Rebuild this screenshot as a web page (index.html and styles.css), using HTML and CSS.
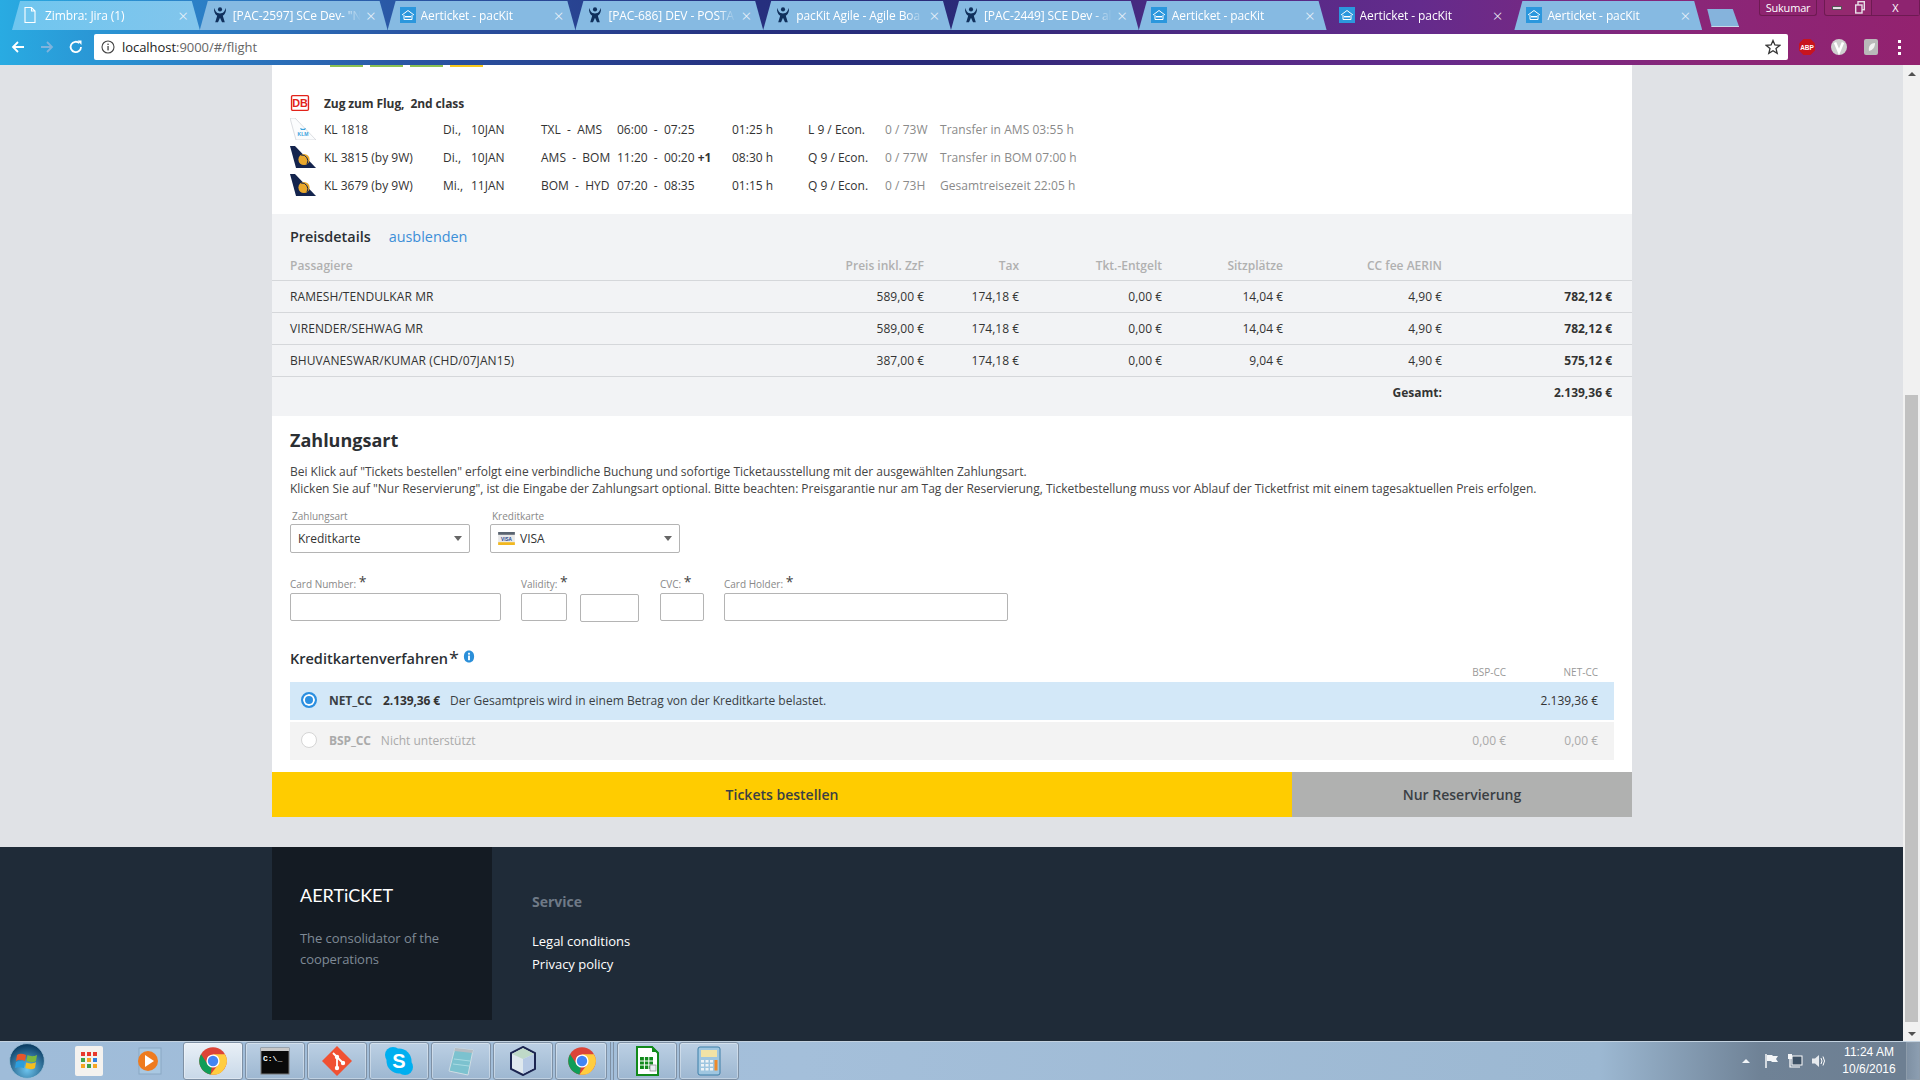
FILE: index.html
```html
<!DOCTYPE html>
<html lang="de">
<head>
<meta charset="utf-8">
<title>Aerticket - packit</title>
<link rel="stylesheet" href="styles.css">
</head>
<body>
<svg class="defs" aria-hidden="true">
  <symbol id="jira" viewBox="0 0 16 20">
    <circle cx="8" cy="3" r="2.6" fill="#10305c"/>
    <path d="M1 1 C2 6 4 8 8 8 C12 8 14 6 15 1 L15.5 4 C15 8 13 10 11.5 11 L14 19 H10.5 L8 13.5 L5.5 19 H2 L4.5 11 C3 10 1 8 .5 4Z" fill="#10305c"/>
  </symbol>
  <symbol id="packit" viewBox="0 0 16 16">
    <rect width="16" height="16" fill="#2b97dd"/>
    <path d="M2 8 L8 3.5 L14 8 M4 8 V12.5 H12 V8" fill="none" stroke="#fff" stroke-width="1"/>
    <rect x="5" y="9" width="6" height="1.4" fill="#fff"/>
  </symbol>
  <symbol id="doc" viewBox="0 0 12 16">
    <path d="M1 .5 H7.5 L11 4 V15.5 H1Z M7.5 .5 V4 H11" fill="none" stroke="#fff" stroke-width="1.1"/>
  </symbol>
  <symbol id="chromeicon" viewBox="0 0 48 48">
    <circle cx="24" cy="24" r="22" fill="#db4437"/>
    <path d="M4.9 13 L15.3 29 L22 34 L20 45.6 A22 22 0 0 1 4.9 13Z" fill="#0f9d58"/>
    <path d="M43.1 13 H24 L32.7 29 L20 45.6 A22 22 0 0 0 43.1 13Z" fill="#ffcd40"/>
    <circle cx="24" cy="24" r="10.5" fill="#fff"/>
    <circle cx="24" cy="24" r="8.3" fill="#4285f4"/>
  </symbol>
  <symbol id="jet" viewBox="0 0 26 22">
    <path d="M0 0 H5 L26 22 H6 Z" fill="#14244d"/>
    <circle cx="14" cy="13.5" r="5.6" fill="#e9a82c"/>
    <path d="M11 9 A6 6 0 0 1 17 18" fill="none" stroke="#14244d" stroke-width="1"/>
  </symbol>
</svg>

<header class="browser">
  <div class="tabstrip">
    <div class="tab tab-first"><svg class="fav fav-doc"><use href="#doc"/></svg><span class="tab-title">Zimbra: Jira (1)</span><span class="tab-x">×</span></div>
    <div class="tab"><svg class="fav"><use href="#jira"/></svg><span class="tab-title">[PAC-2597] SCe Dev- "N</span><span class="tab-x">×</span></div>
    <div class="tab"><svg class="fav"><use href="#packit"/></svg><span class="tab-title">Aerticket - pacKit</span><span class="tab-x">×</span></div>
    <div class="tab"><svg class="fav"><use href="#jira"/></svg><span class="tab-title">[PAC-686] DEV - POSTA</span><span class="tab-x">×</span></div>
    <div class="tab"><svg class="fav"><use href="#jira"/></svg><span class="tab-title">pacKit Agile - Agile Boa</span><span class="tab-x">×</span></div>
    <div class="tab"><svg class="fav"><use href="#jira"/></svg><span class="tab-title">[PAC-2449] SCE Dev - al</span><span class="tab-x">×</span></div>
    <div class="tab"><svg class="fav"><use href="#packit"/></svg><span class="tab-title">Aerticket - pacKit</span><span class="tab-x">×</span></div>
    <div class="tab tab-active"><svg class="fav"><use href="#packit"/></svg><span class="tab-title">Aerticket - pacKit</span><span class="tab-x">×</span></div>
    <div class="tab"><svg class="fav"><use href="#packit"/></svg><span class="tab-title">Aerticket - pacKit</span><span class="tab-x">×</span></div>
    <div class="newtab"></div>
    <div class="winctl">
      <div class="user">Sukumar</div>
      <div class="winbtns">
        <span class="winbtn win-min"><i class="min-glyph"></i></span>
        <span class="winbtn win-max"><svg class="max-glyph" viewBox="0 0 10 13"><rect x="3" y=".7" width="6.3" height="8" fill="none" stroke="#e8e0e8" stroke-width="1.4"/><rect x=".7" y="4" width="6.3" height="8" fill="#94296f" stroke="#e8e0e8" stroke-width="1.4"/></svg></span>
        <span class="winbtn win-close">X</span>
      </div>
    </div>
  </div>
  <div class="toolbar">
    <svg class="nav" viewBox="0 0 16 16"><path d="M14 8 H3 M8 3 L3 8 L8 13" fill="none" stroke="#fff" stroke-width="1.8"/></svg>
    <svg class="nav nav-dim" viewBox="0 0 16 16"><path d="M2 8 H13 M8 3 L13 8 L8 13" fill="none" stroke="#7fb3dc" stroke-width="1.8"/></svg>
    <svg class="nav" viewBox="0 0 16 16"><path d="M13 8 A5.2 5.2 0 1 1 11.4 4.2" fill="none" stroke="#fff" stroke-width="1.8"/><path d="M9.5 1.5 H13.5 V6 Z" fill="#fff"/></svg>
    <div class="omnibox">
      <svg class="info" viewBox="0 0 14 14"><circle cx="7" cy="7" r="6" fill="none" stroke="#444" stroke-width="1.1"/><rect x="6.4" y="6" width="1.3" height="4.4" fill="#444"/><rect x="6.4" y="3.6" width="1.3" height="1.4" fill="#444"/></svg>
      <span class="url">localhost<span class="url-dim">:9000/#/flight</span></span>
      <svg class="star" viewBox="0 0 16 16"><path d="M8 1.5 L9.9 6 L14.7 6.4 L11 9.6 L12.2 14.4 L8 11.8 L3.8 14.4 L5 9.6 L1.3 6.4 L6.1 6Z" fill="none" stroke="#333" stroke-width="1.3"/></svg>
    </div>
    <div class="ext-row">
      <svg class="ext" viewBox="0 0 18 18"><path d="M5.5 1 H12.5 L17 5.5 V12.5 L12.5 17 H5.5 L1 12.5 V5.5Z" fill="#c8141e"/><text x="9" y="11.8" class="abp-text">ABP</text></svg>
      <svg class="ext" viewBox="0 0 18 18"><circle cx="9" cy="9" r="8" fill="#cfcfcf"/><path d="M5 4.5 L9 14 L13 4.5" fill="none" stroke="#fff" stroke-width="2.6"/></svg>
      <svg class="ext" viewBox="0 0 18 18"><rect x="2" y="1" width="14" height="16" rx="2" fill="#b9b9b9"/><path d="M7 13 C6 8 9 5 13 5 C13 9 11 12 7 13Z" fill="#f1f1f1"/></svg>
      <span class="kebab"><i></i><i></i><i></i></span>
    </div>
  </div>
</header>

<div class="viewport">
  <main class="page">
    <div class="wrap card">
      <div class="steps"><i class="step step-g"></i><i class="step step-g"></i><i class="step step-g"></i><i class="step step-y"></i></div>

      <section class="flights">
        <div class="train">
          <svg class="db" viewBox="0 0 16 14"><rect x=".6" y=".6" width="14.8" height="12.8" rx="1" fill="#fff" stroke="#e2231a" stroke-width="1.2"/><text x="8" y="10.6" class="db-text">DB</text></svg>
          <strong>Zug zum Flug,&nbsp; 2nd class</strong>
        </div>
        <div class="flight">
          <svg class="tail" viewBox="0 0 26 22"><path d="M0 0 H5 L26 22 H6 Z" fill="#fbfcfd" stroke="#d3d6da" stroke-width=".8"/><path d="M10 10 l1 2 h4 l1 -2 l-3 1z" fill="#3aa2dd"/><text x="13" y="18" class="klm-text">KLM</text></svg>
          <span>KL 1818</span><span>Di.,</span><span>10JAN</span><span class="pre">TXL  -  AMS</span><span class="pre">06:00  -  07:25</span><span>01:25 h</span><span>L 9 / Econ.</span><span class="muted">0 / 73W</span><span class="muted">Transfer in AMS 03:55 h</span>
        </div>
        <div class="flight">
          <svg class="tail"><use href="#jet"/></svg>
          <span>KL 3815 (by 9W)</span><span>Di.,</span><span>10JAN</span><span class="pre">AMS  -  BOM</span><span class="pre">11:20  -  00:20 <b class="plus">+1</b></span><span>08:30 h</span><span>Q 9 / Econ.</span><span class="muted">0 / 77W</span><span class="muted">Transfer in BOM 07:00 h</span>
        </div>
        <div class="flight">
          <svg class="tail"><use href="#jet"/></svg>
          <span>KL 3679 (by 9W)</span><span>Mi.,</span><span>11JAN</span><span class="pre">BOM  -  HYD</span><span class="pre">07:20  -  08:35</span><span>01:15 h</span><span>Q 9 / Econ.</span><span class="muted">0 / 73H</span><span class="muted">Gesamtreisezeit 22:05 h</span>
        </div>
      </section>

      <section class="prices">
        <div class="price-title"><strong>Preisdetails</strong><a class="hide-link">ausblenden</a></div>
        <div class="prow phead"><span>Passagiere</span><span>Preis inkl. ZzF</span><span>Tax</span><span>Tkt.-Entgelt</span><span>Sitzplätze</span><span>CC fee AERIN</span><span></span></div>
        <div class="prow"><span>RAMESH/TENDULKAR MR</span><span>589,00 €</span><span>174,18 €</span><span>0,00 €</span><span>14,04 €</span><span>4,90 €</span><b>782,12 €</b></div>
        <div class="prow"><span>VIRENDER/SEHWAG MR</span><span>589,00 €</span><span>174,18 €</span><span>0,00 €</span><span>14,04 €</span><span>4,90 €</span><b>782,12 €</b></div>
        <div class="prow"><span>BHUVANESWAR/KUMAR (CHD/07JAN15)</span><span>387,00 €</span><span>174,18 €</span><span>0,00 €</span><span>9,04 €</span><span>4,90 €</span><b>575,12 €</b></div>
        <div class="prow ptotal"><span></span><span></span><span></span><span></span><span></span><b>Gesamt:</b><b>2.139,36 €</b></div>
      </section>

      <section class="payment">
        <h2>Zahlungsart</h2>
        <p class="intro">Bei Klick auf "Tickets bestellen" erfolgt eine verbindliche Buchung und sofortige Ticketausstellung mit der ausgewählten Zahlungsart.<br>Klicken Sie auf "Nur Reservierung", ist die Eingabe der Zahlungsart optional. Bitte beachten: Preisgarantie nur am Tag der Reservierung, Ticketbestellung muss vor Ablauf der Ticketfrist mit einem tagesaktuellen Preis erfolgen.</p>

        <div class="selects">
          <div class="field field-type">
            <label>Zahlungsart</label>
            <div class="select"><span>Kreditkarte</span><i class="caret"></i></div>
          </div>
          <div class="field field-card">
            <label>Kreditkarte</label>
            <div class="select">
              <svg class="visa" viewBox="0 0 18 14"><rect width="18" height="14" rx="1" fill="#e9e9e9"/><rect width="18" height="3" fill="#5a6470"/><rect y="11" width="18" height="3" fill="#f2b820"/><text x="9" y="9.6" class="visa-text">VISA</text></svg>
              <span>VISA</span><i class="caret"></i>
            </div>
          </div>
        </div>

        <div class="inputs">
          <div class="ifield if-num"><div class="ilabel">Card Number: <sup>*</sup></div><div class="input"></div></div>
          <div class="ifield if-val"><div class="ilabel">Validity: <sup>*</sup></div><div class="input"></div></div>
          <div class="ifield if-val2"><div class="ilabel">&nbsp;</div><div class="input input-low"></div></div>
          <div class="ifield if-cvc"><div class="ilabel">CVC: <sup>*</sup></div><div class="input"></div></div>
          <div class="ifield if-holder"><div class="ilabel">Card Holder: <sup>*</sup></div><div class="input"></div></div>
        </div>

        <div class="method-head">
          <h3>Kreditkartenverfahren<sup>*</sup><svg class="i-info" viewBox="0 0 12 14"><path d="M6 .5 C9.4 .5 11.5 3 11.5 7 C11.5 11 9.4 13.5 6 13.5 C2.6 13.5 .5 11 .5 7 C.5 3 2.6 .5 6 .5Z" fill="#2b8fd9"/><rect x="5" y="6" width="2" height="5" fill="#fff"/><rect x="5" y="3" width="2" height="2" fill="#fff"/></svg></h3>
          <span class="mcol">BSP-CC</span><span class="mcol">NET-CC</span>
        </div>
        <div class="method method-on">
          <span class="radio radio-on"></span><b>NET_CC</b><b class="m-price">2.139,36 €</b><span class="m-desc">Der Gesamtpreis wird in einem Betrag von der Kreditkarte belastet.</span>
          <span class="mval"></span><span class="mval">2.139,36 €</span>
        </div>
        <div class="method method-off">
          <span class="radio"></span><b>BSP_CC</b><span class="m-note">Nicht unterstützt</span>
          <span class="mval">0,00 €</span><span class="mval">0,00 €</span>
        </div>
      </section>

      <div class="actions">
        <div class="btn btn-book">Tickets bestellen</div>
        <div class="btn btn-reserve">Nur Reservierung</div>
      </div>
    </div>

    <footer class="footer">
      <div class="wrap foot-inner">
        <div class="brand">
          <div class="brand-name">AERTiCKET</div>
          <p>The consolidator of the cooperations</p>
        </div>
        <div class="service">
          <h4>Service</h4>
          <a>Legal conditions</a>
          <a>Privacy policy</a>
        </div>
      </div>
    </footer>
  </main>
  <aside class="scrollbar">
    <i class="sb-up"></i>
    <i class="sb-thumb"></i>
    <i class="sb-down"></i>
  </aside>
</div>

<nav class="taskbar">
  <svg class="orb" viewBox="0 0 36 36">
    <defs><radialGradient id="orbg" cx=".5" cy=".75" r=".7"><stop offset="0" stop-color="#6cc4ee"/><stop offset="1" stop-color="#0d3f66"/></radialGradient></defs>
    <circle cx="18" cy="18" r="17.4" fill="url(#orbg)" stroke="#9fc3da" stroke-width=".8"/>
    <path d="M8 12 C11 10 14 11 17 12 L16 18 C13 17 10 16 7 18Z" fill="#e8562a"/>
    <path d="M18.5 12 C21 13 24 14 28 12 L27 18 C24 20 21 19 17.5 18Z" fill="#7cb83e"/>
    <path d="M7 19 C10 17.5 13 18 15.8 19 L15 25 C12 24 9 24 6 25Z" fill="#2c9ddc"/>
    <path d="M17.2 19.5 C21 20.5 24 21 27 19 L26 25 C23 27 20 26 16.3 25Z" fill="#f5bd1f"/>
  </svg>
  <div class="pinned pin-apps">
    <svg viewBox="0 0 30 30" class="ti"><rect x="1" y="0" width="28" height="30" rx="2" fill="#f4f2ef"/><g fill="#e8382d"><rect x="7" y="6" width="4" height="4"/><rect x="13" y="6" width="4" height="4"/><rect x="19" y="6" width="4" height="4"/></g><g fill="#3fa14a"><rect x="7" y="12" width="4" height="4"/></g><g fill="#f5a623"><rect x="13" y="12" width="4" height="4"/></g><g fill="#2f7fe0"><rect x="19" y="12" width="4" height="4"/></g><g fill="#f5a623"><rect x="7" y="18" width="4" height="4"/></g><g fill="#3fa14a"><rect x="13" y="18" width="4" height="4"/></g><g fill="#f5a623"><rect x="19" y="18" width="4" height="4"/></g></svg>
  </div>
  <div class="pinned pin-media">
    <svg viewBox="0 0 30 30" class="ti"><rect x="5" y="2" width="22" height="26" fill="#a9c8e2" stroke="#8aa8c4"/><circle cx="14" cy="15" r="10" fill="#ee7b1f"/><path d="M11 9 L20 15 L11 21Z" fill="#fff"/></svg>
  </div>
  <div class="tbtn tbtn-active"><svg class="ti"><use href="#chromeicon"/></svg></div>
  <div class="tbtn">
    <svg viewBox="0 0 30 30" class="ti"><rect x="1" y="2" width="28" height="26" fill="#0a0a0a" stroke="#777"/><rect x="1" y="2" width="28" height="3" fill="#c8c8c8"/><text x="3" y="15" class="cmd-text">C:\_</text></svg>
  </div>
  <div class="tbtn">
    <svg viewBox="0 0 30 30" class="ti"><path d="M15 0 L30 15 L15 30 L0 15Z" fill="#f05133"/><path d="M11 7 L21 17 M15 11 V22" stroke="#fff" stroke-width="1.8"/><circle cx="15" cy="11" r="2.2" fill="#fff"/><circle cx="15" cy="22" r="2.2" fill="#fff"/><circle cx="21" cy="17" r="2.2" fill="#fff"/></svg>
  </div>
  <div class="tbtn">
    <svg viewBox="0 0 30 30" class="ti"><circle cx="9" cy="9" r="8" fill="#00aff0"/><circle cx="21" cy="21" r="8" fill="#00aff0"/><circle cx="15" cy="15" r="12.5" fill="#00aff0"/><text x="15" y="22" class="sk-text">S</text></svg>
  </div>
  <div class="tbtn">
    <svg viewBox="0 0 30 30" class="ti"><path d="M9 2 L27 4 L22 29 L3 25Z" fill="#7cc2cf" stroke="#cfdde4"/><path d="M9 2 L27 4 L26.3 7 L8.4 5Z" fill="#b6bcc2"/><path d="M8 13 L24 15 M7 18 L23 20" stroke="#a8dbe3"/></svg>
  </div>
  <div class="tbtn">
    <svg viewBox="0 0 30 30" class="ti"><path d="M15 1 L27 7 V23 L15 29 L3 23 V7Z" fill="#dfe8ee" stroke="#1b2450" stroke-width="2"/><path d="M4 8 L15 13 L26 8 L15 2Z" fill="#bfd9c8"/><path d="M15 13 V28 L26 22 V8Z" fill="#b6c9e4"/></svg>
  </div>
  <div class="tbtn tbtn-short"><svg class="ti"><use href="#chromeicon"/></svg></div>
  <div class="tb-sep"></div>
  <div class="tbtn">
    <svg viewBox="0 0 30 30" class="ti"><path d="M5 1 H20 L26 7 V29 H5Z" fill="#fff" stroke="#128a1b" stroke-width="2"/><path d="M20 0 L26 6 H20Z" fill="#128a1b"/><rect x="8" y="11" width="13" height="12" fill="#128a1b"/><path d="M12.4 11 V23 M16.8 11 V23 M8 15 H21 M8 19 H21" stroke="#fff"/><rect x="18" y="19" width="6" height="6" fill="#e9edf0" stroke="#777" stroke-width=".6"/></svg>
  </div>
  <div class="tbtn">
    <svg viewBox="0 0 30 30" class="ti"><rect x="4" y="1" width="22" height="28" rx="2" fill="#9fc6e0" stroke="#3d7ea8"/><rect x="7" y="4" width="16" height="7" fill="#f2e3a6"/><g fill="#eef3f6"><rect x="7" y="14" width="3" height="2.5"/><rect x="11.5" y="14" width="3" height="2.5"/><rect x="16" y="14" width="3" height="2.5"/><rect x="7" y="18" width="3" height="2.5"/><rect x="11.5" y="18" width="3" height="2.5"/><rect x="16" y="18" width="3" height="2.5"/><rect x="7" y="22" width="3" height="2.5"/><rect x="11.5" y="22" width="3" height="2.5"/><rect x="16" y="22" width="3" height="2.5"/></g><rect x="20.5" y="14" width="3" height="10.5" fill="#ee8a2a"/></svg>
  </div>
  <div class="tray">
    <i class="tray-up"></i>
    <svg class="tray-ic" viewBox="0 0 16 16"><path d="M3 1 V15" stroke="#fff" stroke-width="1.4"/><path d="M4 2 H9 L10 3 H15 L13 6 L15 9 H9 L8 8 H4Z" fill="#f4f6f8"/></svg>
    <svg class="tray-ic" viewBox="0 0 16 16"><rect x="5" y="3" width="10" height="9" fill="#3e5266" stroke="#fff"/><rect x="1" y="1" width="4" height="5" fill="#f4f6f8"/><path d="M3 6 V14 H13" fill="none" stroke="#fff" stroke-width="1.2"/></svg>
    <svg class="tray-ic" viewBox="0 0 16 16"><path d="M1 5.5 H4 L8 2 V14 L4 10.5 H1Z" fill="#e6eaee"/><path d="M10 5 Q12 8 10 11 M12 3.5 Q15 8 12 12.5" fill="none" stroke="#fff"/></svg>
    <div class="clock"><span>11:24 AM</span><span>10/6/2016</span></div>
    <i class="showdesk"></i>
  </div>
</nav>
</body>
</html>
```
FILE: styles.css
```css
* { box-sizing: border-box; }
html, body { margin: 0; height: 100%; }
body {
  width: 1920px; height: 1080px; overflow: hidden;
  display: flex; flex-direction: column;
  font-family: "Open Sans", "Liberation Sans", sans-serif;
  font-size: 12px; color: #333;
}
.defs { display: none; }
svg { display: block; flex: none; }

/* Browser chrome */
.browser {
  height: 65px; flex: none;
  background: linear-gradient(90deg, #29abe2 0, #2b7fc6 200px, #2a56a4 400px, #262f7e 760px, #2a2a78 960px, #4f2a84 1200px, #642b8c 1420px, #8a2678 1700px, #93226f 1920px);
}
.tabstrip { height: 30px; display: flex; padding: 1px 0 0 12px; position: relative; }
.tab {
  width: 187.8px; height: 29px; flex: none;
  display: flex; align-items: center; padding: 0 0 1px 12px; position: relative;
  background: #86bae2;
  clip-path: polygon(8px 0, calc(100% - 8px) 0, 100% 100%, 0 100%);
  color: #fff; font-size: 12px; letter-spacing: -.1px;
}
.tab-first { background: linear-gradient(90deg, #6fc6ef, #82c5ec); }
.tab-active { background: transparent; }
.fav { width: 16px; height: 16px; margin-right: 5px; }
.fav-doc { width: 12px; margin: 0 9px 0 0; }
.tab-title {
  width: 128px; white-space: nowrap; overflow: hidden;
  -webkit-mask-image: linear-gradient(90deg, #000 110px, transparent 128px);
  mask-image: linear-gradient(90deg, #000 110px, transparent 128px);
}
.tab-x { width: 14px; margin-left: 3px; font-size: 17px; line-height: 1; font-weight: 300; text-align: center; color: #eef4fa; }
.newtab {
  width: 32px; height: 18px; margin: 8px 0 0 5px; flex: none;
  background: #85b3dc; border-bottom: 1px solid #c9d9ea;
  clip-path: polygon(0 0, 80% 0, 100% 100%, 14% 100%);
}
.winctl { display: flex; margin-left: auto; height: 17px; margin-top: -1px; gap: 7px; }
.user {
  width: 58px; height: 16px; text-align: center; color: #fff; font-size: 11px; line-height: 15px;
  border: 1px solid #6e1a52; border-top: 0; border-radius: 0 0 3px 3px; letter-spacing: -.2px; background: #8e2470;
}
.winbtns { display: flex; width: 96px; height: 16px; border: 1px solid #6e1a52; border-top: 0; border-radius: 0 0 3px 3px; background: #94296f; }
.winbtn { display: flex; align-items: center; justify-content: center; color: #fff; }
.win-min { width: 24px; }
.win-max { width: 22px; }
.win-close { flex: 1; font-size: 11px; background: #8e2470; border-left: 1px solid #6e1a52; }
.min-glyph { width: 10px; height: 4px; background: #e8e0e8; border: 1px solid #555; }
.max-glyph { width: 10px; height: 13px; }

.toolbar { height: 35px; display: flex; align-items: flex-start; padding: 4px 0 0 10px; }
.nav { width: 16px; height: 16px; margin: 5px 0 0 0; }
.nav-dim { margin-left: 13px; }
.nav + .nav + .nav { margin-left: 13px; }
.omnibox {
  width: 1694px; height: 26px; margin-left: 10px; background: #fff; border-radius: 2px;
  display: flex; align-items: center; padding: 0 7px 0 7px;
}
.info { width: 14px; height: 14px; margin-right: 7px; }
.url { font-size: 13px; color: #222; letter-spacing: -.05px; }
.url-dim { color: #666; }
.star { width: 16px; height: 16px; margin-left: auto; }
.ext-row { display: flex; align-items: center; gap: 14px; margin-left: 10px; height: 26px; }
.ext { width: 18px; height: 18px; }
.abp-text { font: 700 6.5px "Liberation Sans", sans-serif; fill: #fff; text-anchor: middle; }
.kebab { display: flex; flex-direction: column; gap: 3px; margin-left: 4px; }
.kebab i { width: 3px; height: 3px; background: #fff; }

/* Page */
.viewport { flex: 1; display: flex; min-height: 0; }
.page { flex: 1; min-width: 0; background: #e0e2e6; display: flex; flex-direction: column; }
.wrap { width: 1360px; margin-left: 272px; }
.card { background: #fff; margin-bottom: 30px; }
.steps { display: flex; height: 2px; padding-left: 58px; gap: 7px; }
.step { width: 33px; height: 2px; }
.step-g { background: #8cc152; }
.step-y { background: #f8c91c; }

.flights { padding: 24px 0 15px 18px; }
.train { height: 24px; display: flex; align-items: center; }
.train strong { font-weight: 700; font-size: 12px; margin-left: 14px; letter-spacing: -.1px; }
.db { width: 20px; height: 16px; margin-left: 0; }
.db-text { font: 700 9.5px "Liberation Sans", sans-serif; fill: #e2231a; text-anchor: middle; }
.klm-text { font: 700 5px "Liberation Sans", sans-serif; fill: #3aa2dd; text-anchor: middle; }
.flight {
  height: 28px; display: grid; align-items: center; white-space: nowrap;
  grid-template-columns: 34px 119px 28px 70px 76px 115px 76px 77px 55px 1fr;
}
.tail { width: 26px; height: 22px; }
.pre { white-space: pre; }
.plus { font-weight: 700; }
.muted { color: #8a8a8a; letter-spacing: .05px; }

.prices { background: #f2f3f5; padding-top: 13px; }
.price-title { height: 20px; padding-left: 18px; display: flex; align-items: center; gap: 18px; font-size: 14.4px; line-height: 20px; }
.price-title strong { font-weight: 600; color: #2b2f33; }
.hide-link { color: #3d8fd8; }
.prow {
  height: 32px; padding: 0 20px 0 18px; align-items: center;
  display: grid; grid-template-columns: 1fr 120px 95px 143px 121px 159px 170px;
  border-bottom: 1px solid #d5d7da; text-align: right; color: #333;
}
.prow > :first-child { text-align: left; letter-spacing: .08px; }
.prow b { font-weight: 700; }
.phead { height: 34px; padding-top: 3px; color: #b0b0b0; font-weight: 600; }
.ptotal { height: 39px; padding-bottom: 8px; border-bottom: 0; }

.payment { padding: 12px 18px 0; }
.payment h2 { margin: 0 0 11px; font-size: 18px; line-height: 24px; font-weight: 700; color: #2b2f33; }
.intro { margin: 0 0 13px; line-height: 17px; color: #444; letter-spacing: -.015px; }
.selects { display: flex; gap: 20px; }
.field-type { width: 180px; }
.field-card { width: 190px; }
.field label { display: block; font-size: 10px; line-height: 12px; color: #888; margin: 0 0 2px 2px; }
.select {
  height: 29px; border: 1px solid #b4b4b4; border-radius: 2px; background: #fff;
  display: flex; align-items: center; padding: 0 7px; font-size: 12px; color: #333;
}
.caret { margin-left: auto; border: 4px solid transparent; border-top: 5px solid #666; border-bottom: 0; }
.visa { width: 17px; height: 13px; margin-right: 5px; }
.visa-text { font: 700 5px "Liberation Sans", sans-serif; fill: #1a3e8c; text-anchor: middle; }

.inputs { display: flex; margin-top: 26px; }
.ilabel { height: 14px; font-size: 10px; line-height: 11px; color: #888; white-space: nowrap; }
.ilabel sup { font-size: 14px; line-height: 0; vertical-align: 1px; color: #444; }
.input { height: 28px; border: 1px solid #b4b4b4; border-radius: 2px; background: #fff; }
.input-low { margin-top: 1px; }
.if-num { width: 211px; }
.if-val { width: 46px; margin-left: 20px; }
.if-val2 { width: 59px; margin-left: 13px; }
.if-cvc { width: 44px; margin-left: 21px; }
.if-holder { width: 284px; margin-left: 20px; }

.method-head { display: flex; height: 33px; margin-top: 27px; position: relative; }
.method-head h3 { margin: 0 auto 0 0; font-size: 14.5px; line-height: 20px; font-weight: 600; color: #2b2f33; display: flex; align-items: center; height: 20px; }
.method-head sup { font-size: 18px; line-height: 0; font-weight: 400; align-self: flex-start; margin: 9px 1px 0 1px; }
.i-info { width: 12px; height: 13px; margin: -5px 0 0 3px; }
.mcol { width: 92px; text-align: right; font-size: 10px; color: #999; margin-top: 17px; line-height: 12px; }
.mcol:last-child { margin-right: 16px; }
.method { height: 38px; display: flex; align-items: center; padding: 0 16px 2px 11px; margin-bottom: 2px; }
.method-on { background: #d3e8f8; color: #3a3f44; }
.method-off { background: #f3f3f3; color: #aaa; }
.radio { width: 16px; height: 16px; border-radius: 50%; border: 1.5px solid #d5d5d5; background: #fff; margin-right: 12px; flex: none; }
.radio-on { border: 2px solid #2b8fe0; box-shadow: inset 0 0 0 2px #fff; background: #2b8fe0; }
.method b { font-weight: 700; letter-spacing: -.1px; }
.m-price { margin-left: 11px; color: #333; }
.m-desc { margin-left: 10px; }
.m-note { margin-left: 10px; }
.mval { width: 92px; text-align: right; }
.m-desc + .mval, .m-note + .mval { margin-left: auto; }
.method-on .mval { color: #333; }

.actions { display: flex; margin-top: 12px; height: 45px; }
.btn { display: flex; align-items: center; justify-content: center; font-size: 14px; font-weight: 600; color: #3a3f44; }
.btn-book { width: 1020px; background: #ffcc00; }
.btn-reserve { flex: 1; background: #b0b1b0; }

/* Footer */
.footer { flex: 1; background: #1f2b38; }
.foot-inner { display: flex; }
.brand { width: 220px; height: 173px; background: #141b23; padding: 36px 28px 0; }
.brand-name { font-family: Lato, sans-serif; font-size: 18px; line-height: 24px; color: #fff; }
.brand p { margin: 21px 0 0; font-size: 13px; line-height: 21px; color: #7f8a96; letter-spacing: -.05px; }
.service { margin-left: 40px; padding-top: 45px; display: flex; flex-direction: column; }
.service h4 { margin: 0 0 18px; font-size: 14px; line-height: 20px; font-weight: 700; color: #6f7a87; }
.service a { font-size: 13px; line-height: 23px; color: #fff; }

.scrollbar { width: 17px; background: #f1f1f1; display: flex; flex-direction: column; align-items: center; }
.sb-up { margin-top: 7px; border: 4px solid transparent; border-bottom: 4px solid #505050; border-top: 0; border-left-width: 4px; }
.sb-thumb { width: 13px; height: 627px; margin-top: 319px; background: #c1c1c1; }
.sb-down { margin-top: auto; margin-bottom: 5px; border: 4px solid transparent; border-top: 4px solid #505050; border-bottom: 0; }

/* Taskbar */
.taskbar {
  height: 39px; flex: none; display: flex; align-items: center; padding-left: 9px;
  background: linear-gradient(90deg, #9fbcd9 0, #a4bfda 800px, #9cb8d2 1600px, #6f8296 1760px, #6d7f92 1900px);
  border-top: 1px solid #c3d2e0;
}
.orb { width: 36px; height: 36px; }
.pinned { display: flex; justify-content: center; align-items: center; }
.pin-apps { margin-left: 29px; width: 30px; }
.pin-media { margin-left: 28px; width: 34px; margin-right: 17px; }
.ti { width: 30px; height: 30px; }
.tbtn {
  width: 60px; height: 38px; margin-right: 2px; display: flex; align-items: center; justify-content: center;
  border: 1px solid #7e90a4; border-radius: 3px;
  background: linear-gradient(180deg, #bcd0e4, #9db7d1);
  box-shadow: inset 0 0 0 1px rgba(255,255,255,.35);
}
.tbtn-active { background: linear-gradient(180deg, #e9f0f7, #c8d8e8); }
.tbtn-short { width: 52px; justify-content: flex-start; padding-left: 11px; margin-right: 0; }
.tb-sep { width: 10px; height: 38px; border-left: 1px solid #7e90a4; border-right: 1px solid #7e90a4; margin: 0 3px 0 3px; width: 4px; }
.cmd-text { font: 700 8px "Liberation Mono", monospace; fill: #fff; }
.sk-text { font: 700 20px "Liberation Sans", sans-serif; fill: #fff; text-anchor: middle; }
.tray { margin-left: auto; display: flex; align-items: center; height: 100%; }
.tray-up { border: 4px solid transparent; border-bottom: 4px solid #f2f5f8; border-top: 0; margin-right: 13px; }
.tray-ic { width: 16px; height: 16px; margin-right: 8px; }
.clock { width: 70px; margin-left: -1px; display: flex; flex-direction: column; align-items: center; color: #fff; font-family: "Liberation Sans", sans-serif; font-size: 12px; line-height: 17px; }
.showdesk { width: 14px; height: 38px; margin-left: 2px; border: 1px solid #8d9cab; background: linear-gradient(90deg, #7e90a3, #8c9eb1); }
```
